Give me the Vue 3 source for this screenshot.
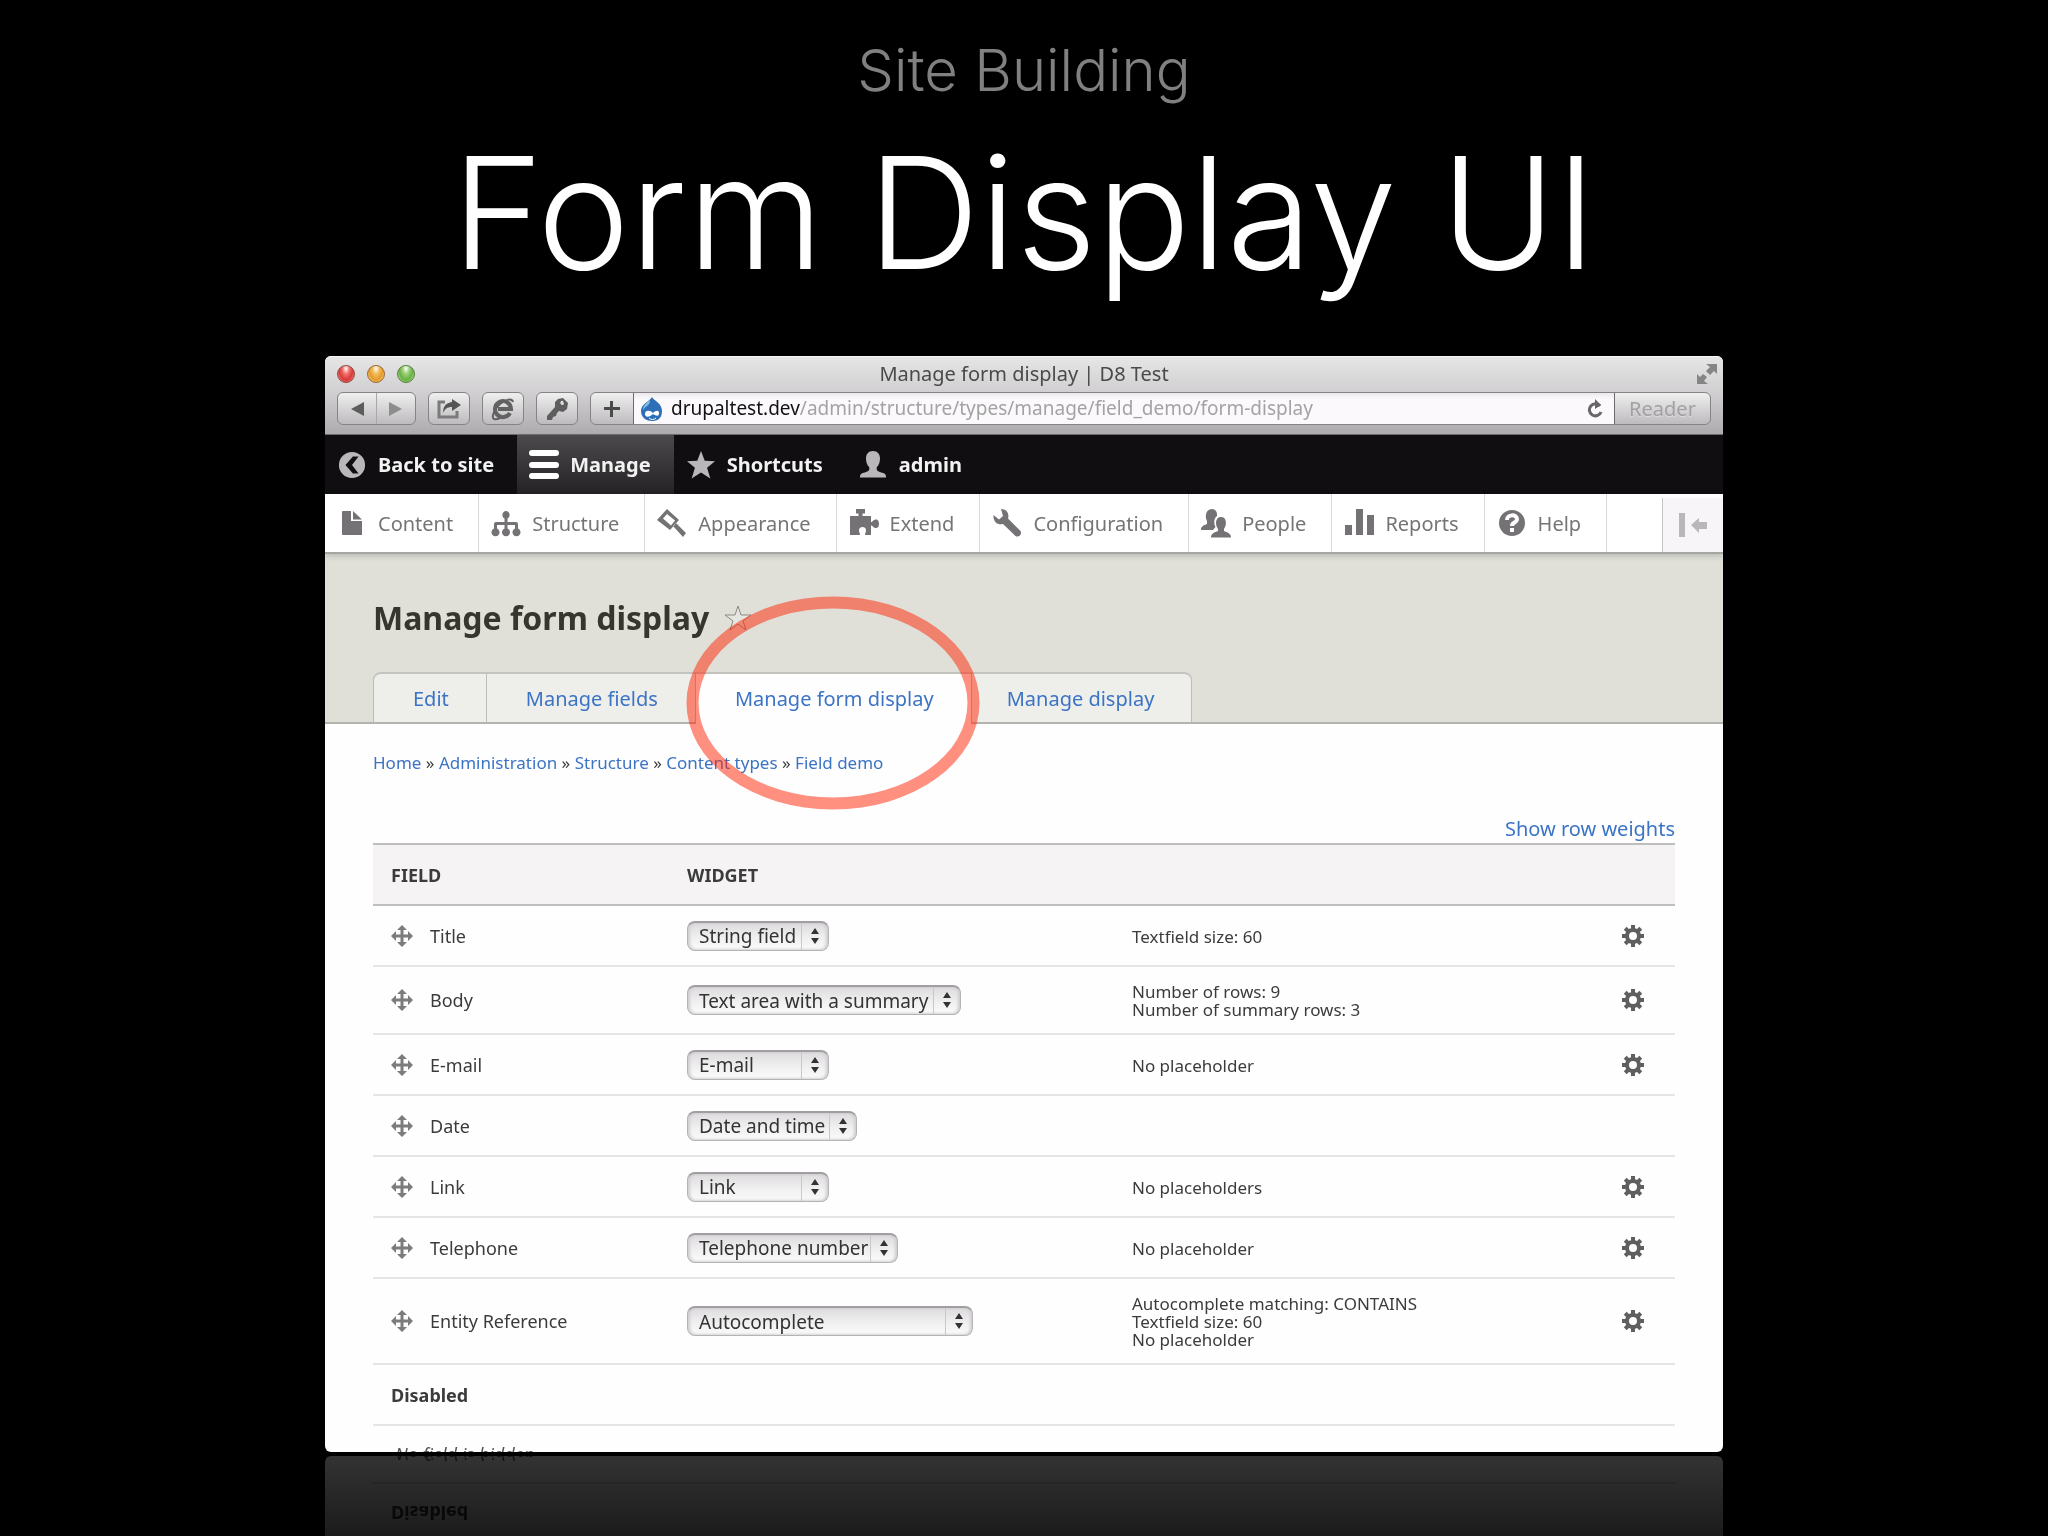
<script setup>
const toolbar = [
  { icon: 'back', label: 'Back to site' },
  { icon: 'menu', label: 'Manage', active: true },
  { icon: 'star', label: 'Shortcuts' },
  { icon: 'user', label: 'admin' },
]

const tray = [
  { icon: 'file', label: 'Content' },
  { icon: 'tree', label: 'Structure' },
  { icon: 'brush', label: 'Appearance' },
  { icon: 'puzzle', label: 'Extend' },
  { icon: 'wrench', label: 'Configuration' },
  { icon: 'people', label: 'People' },
  { icon: 'chart', label: 'Reports' },
  { icon: 'help', label: 'Help' },
]

/* Shapes on a 30 x 30 grid */
const glyphs = {
  back: 'M15 1a14 14 0 1 0 0 28a14 14 0 0 0 0-28zM16 6h6l-7 9 7 9h-6L8 15z',
  menu: 'M3 0h24a3 3 0 0 1 0 6H3a3 3 0 0 1 0-6zM3 12h24a3 3 0 0 1 0 6H3a3 3 0 0 1 0-6zM3 23h24a3 3 0 0 1 0 6H3a3 3 0 0 1 0-6z',
  star: 'M15 0l4 10.500 11 .500-8.500 7 3.500 11.500-10-6.500-10 6.500 3.500-11.500-8.500-7 11-.500z',
  user: 'M15 0c5 0 7.500 3.500 7.500 8 0 4-1.500 7.500-3.500 9.500v2.500c1 2 4 2.500 7 3.500 2.500 1 3 2 3 5H1c0-3 .500-4 3-5 3-1 6-1.500 7-3.500v-2.500C9 15.500 7.500 12 7.500 8 7.500 3.500 10 0 15 0z',
  file: 'M6 3h8v10h11v14H6a1 1 0 0 1-1-1V4a1 1 0 0 1 1-1zM16 3l9 8.500h-9z',
  tree: 'M15 3a4 4 0 0 1 1.500 7.500V14H25a2 2 0 0 1 2 2v4.500a4 4 0 1 1-3 0V17h-7.500v3.500a4 4 0 1 1-3 0V17H6v3.500a4 4 0 1 1-3 0V16a2 2 0 0 1 2-2h8.500v-3.500A4 4 0 0 1 15 3z',
  brush: 'M10 1l12 11-9 10L0 12zM10 6l-4 4.500 8 7 4-5zM16 18l3-3 10 10-3 4z',
  puzzle: 'M1 8h8.500V5.500H7V1h9v4.500h-2.500V8H22v6c2 0 2-2.500 5-2.500 4 0 4 8.500 0 8.500-3 0-3-2.500-5-2.500V27h-6c0-2 1-2.500 1-5 0-4-7-4-7 0 0 2.500 1 3 1 5H1z',
  wrench: 'M9 1c6 0 8.500 5 7 9.500L28.500 23c2 3-2 7-5 5L11 16C6 17.500 1 14 1.500 7l5.500 4.500L11 8z',
  people: 'M11 1c3.500 0 5.500 3 5 7-3 2-3.500 7-1.500 11L12 22H0c0-3 1-4 6-6v-3C4 10 4 1 11 1zM20 9c6 0 6 8 3 12v2c5 2 7 3 7 6.500H10c0-3.500 2-4.500 7-6.500v-2c-3-4-3-12 3-12z',
  chart: 'M1 17h7v10H1zM12 1h7v26h-7zM23 7h7v20h-7z',
}

const tabs = [
  { label: 'Edit' },
  { label: 'Manage fields' },
  { label: 'Manage form display', active: true },
  { label: 'Manage display' },
]

const crumbs = ['Home', 'Administration', 'Structure', 'Content types', 'Field demo']

const fields = [
  { name: 'Title', widget: 'String field', width: 142, summary: ['Textfield size: 60'] },
  { name: 'Body', widget: 'Text area with a summary', width: 274, summary: ['Number of rows: 9', 'Number of summary rows: 3'] },
  { name: 'E-mail', widget: 'E-mail', width: 142, summary: ['No placeholder'] },
  { name: 'Date', widget: 'Date and time', width: 170, summary: [] },
  { name: 'Link', widget: 'Link', width: 142, summary: ['No placeholders'] },
  { name: 'Telephone', widget: 'Telephone number', width: 211, summary: ['No placeholder'] },
  { name: 'Entity Reference', widget: 'Autocomplete', width: 286, summary: ['Autocomplete matching: CONTAINS', 'Textfield size: 60', 'No placeholder'] },
]

const teeth = [0, 45, 90, 135, 180, 225, 270, 315]
</script>

<template>
  <main class="slide">
    <p class="section">Site Building</p>
    <h1 class="heading">Form Display UI</h1>

    <div class="window">
      <header class="chrome">
        <div class="titlebar">
          <div class="lights">
            <i class="light red"></i><i class="light amber"></i><i class="light green"></i>
          </div>
          <span class="title">Manage form display | D8 Test</span>
          <svg class="expand" viewBox="0 0 22 22" aria-hidden="true">
            <path d="M10 1h11v10l-3-3-4 4-4-4 4-4zM12 21H1V11l3 3 3-3 4 3-3 4z" />
          </svg>
        </div>
        <div class="controls">
          <div class="history">
            <button type="button" aria-label="Previous page">
              <svg width="14" height="14" viewBox="0 0 14 14"><path d="M14 0v14L1 7z" fill="#5c5c5c" /></svg>
            </button>
            <button type="button" aria-label="Next page">
              <svg width="14" height="14" viewBox="0 0 14 14"><path d="M0 0v14l13-7z" fill="#8d8d8d" /></svg>
            </button>
          </div>
          <button type="button" class="tool" aria-label="Share">
            <svg width="26" height="22" viewBox="0 0 26 22">
              <path d="M9 4H3v15h18v-6" fill="none" stroke="#7b7b7b" stroke-width="3" />
              <path d="M16 1l9 6-9 6V9c-5 0-7 2-9 6 0-7 3-10 9-11z" fill="#555" />
            </svg>
          </button>
          <button type="button" class="tool" aria-label="Browser mode">
            <svg width="24" height="24" viewBox="0 0 24 24">
              <path d="M19 16a8 8 0 1 1 1-4H7" fill="none" stroke="#626262" stroke-width="4" />
              <path d="M22 5c-1-4-7-3-13 2S0 21 3 22c2 1 4 0 6-1" fill="none" stroke="#626262" stroke-width="2" />
            </svg>
          </button>
          <button type="button" class="tool" aria-label="Passwords">
            <svg width="24" height="24" viewBox="0 0 24 24">
              <path d="M13 2l5-1 5 5-1 6-4 3-4-1-2 2-1 3-3 1-1 3H2v-4l8-9V5zM18 4a2 2 0 1 0 1 3z" fill="#5e5e5e" fill-rule="evenodd" />
            </svg>
          </button>
          <div class="address">
            <button type="button" class="add" aria-label="Add bookmark">
              <svg width="16" height="16" viewBox="0 0 16 16"><path d="M6 0h3v6h7v3H9v7H6V9H0V6h6z" fill="#4a4a4a" /></svg>
            </button>
            <div class="url" role="textbox" aria-label="Address">
              <svg width="21" height="24" viewBox="0 0 21 24" aria-hidden="true">
                <path d="M11 0c2 4 10 6 10 14S16 24 11 24 0 21 0 14 8 5 11 0z" fill="#2d70b8" />
                <path d="M9 3C5 6 2 9 2 13c3-5 7-4 7-10z" fill="#86bce6" />
                <path d="M4 17c0-4 5-4 8-1 3-3 6-3 6 0 0 4-3 3-6 1-3 3-8 4-8 0z" fill="#fff" />
                <path d="M8 21c2 2 5 2 7 0" fill="none" stroke="#fff" stroke-width="1" />
              </svg>
              <span class="path"><b>drupaltest.dev</b>/admin/structure/types/manage/field_demo/form-display</span>
              <svg width="18" height="20" viewBox="0 0 18 20" aria-hidden="true">
                <path d="M14 7a6 6 0 1 0 1 6" fill="none" stroke="#666" stroke-width="3" />
                <path d="M9 0l6 6-6 4z" fill="#666" />
              </svg>
            </div>
            <button type="button" class="reader">Reader</button>
          </div>
        </div>
      </header>

      <nav class="bar">
        <a v-for="item in toolbar" :key="item.label" href="#" :class="{ active: item.active }">
          <svg class="glyph" viewBox="0 0 30 30" aria-hidden="true"><path :d="glyphs[item.icon]" fill-rule="evenodd" /></svg>
          {{ item.label }}
        </a>
      </nav>

      <nav class="tray">
        <a v-for="item in tray" :key="item.label" href="#">
          <svg class="glyph" viewBox="0 0 30 30" aria-hidden="true">
            <path v-if="glyphs[item.icon]" :d="glyphs[item.icon]" fill-rule="evenodd" />
            <template v-else>
              <circle cx="15" cy="15" r="13" />
              <path d="M10 12c0-6 10-6 10-1 0 4-5 3-5 7" fill="none" stroke="#fff" stroke-width="4" />
              <rect x="13" y="20" width="4" height="4" fill="#fff" />
            </template>
          </svg>
          {{ item.label }}
        </a>
        <button type="button" class="orient" aria-label="Vertical orientation">
          <svg width="30" height="24" viewBox="0 0 30 24"><path d="M1 0h6v24H1zM13 12l8-7v4h8v7h-8v4z" fill="#b9b7b9" /></svg>
        </button>
      </nav>

      <section class="head">
        <h2>
          Manage form display
          <svg width="28" height="28" viewBox="0 0 28 28" aria-hidden="true">
            <path d="M14 2l3 9h10l-8 6 3 9-8-6-8 6 3-9-8-6h10z" fill="#e6e6e0" stroke="#8b8b80" stroke-width="1" />
          </svg>
        </h2>
        <nav class="tabs">
          <a v-for="tab in tabs" :key="tab.label" href="#" :class="{ active: tab.active }">
            {{ tab.label }}<span v-if="tab.active" class="ring"></span>
          </a>
        </nav>
      </section>

      <section class="body">
        <nav class="crumbs">
          <template v-for="(crumb, i) in crumbs" :key="crumb"><span v-if="i"> » </span><a href="#">{{ crumb }}</a></template>
        </nav>
        <a class="weights" href="#">Show row weights</a>
        <table>
          <thead>
            <tr><th class="name">Field</th><th class="widget">Widget</th><th></th><th class="ops"></th></tr>
          </thead>
          <tbody>
            <tr v-for="field in fields" :key="field.name">
              <td>
                <div class="label">
                  <svg width="22" height="22" viewBox="0 0 22 22" aria-hidden="true">
                    <path d="M11 0l5 5h-3.500v4.500H17V6l5 5-5 5v-3.500h-4.500V17H16l-5 5-5-5h3.500v-4.500H5V16l-5-5 5-5v3.500h4.500V5H6z" fill="#7c7c7c" />
                  </svg>
                  <label :for="field.name">{{ field.name }}</label>
                </div>
              </td>
              <td>
                <span class="picker" :style="{ width: field.width + 'px' }">
                  <select :id="field.name"><option>{{ field.widget }}</option></select>
                  <svg width="8" height="16" viewBox="0 0 8 16" aria-hidden="true"><path d="M4 0l4 6H0zM4 16l4-6H0z" fill="#333" /></svg>
                </span>
              </td>
              <td class="summary"><div v-for="line in field.summary" :key="line">{{ line }}</div></td>
              <td>
                <button v-if="field.summary.length" type="button" class="gear" :aria-label="'Edit ' + field.name">
                  <svg width="22" height="22" viewBox="-11 -11 22 22">
                    <circle r="6" fill="none" stroke="#5f5f5f" stroke-width="4" />
                    <rect v-for="a in teeth" :key="a" x="-2" y="-11" width="4" height="5" fill="#5f5f5f" :transform="`rotate(${a})`" />
                  </svg>
                </button>
              </td>
            </tr>
            <tr><td colspan="4"><strong>Disabled</strong></td></tr>
            <tr><td colspan="4" class="empty"><em>No field is hidden.</em></td></tr>
          </tbody>
        </table>
      </section>
    </div>
  </main>
</template>

<style>
body {
  margin: 0;
  background: #000;
}
</style>

<style scoped>
* {
  box-sizing: border-box;
}

.slide {
  display: flex;
  flex-direction: column;
  align-items: center;
  height: 100vh;
  padding: 30px 16px 84px;
  overflow: hidden;
  background: #000;
  color: #fff;
  font-family: "Noto Sans", "Open Sans", sans-serif;
}

.section,
.heading {
  flex: none;
  margin: 0;
  font-family: Inter, Roboto, sans-serif;
  font-weight: 300;
}

.section {
  margin-bottom: 8px;
  color: #808080;
  font-size: 58px;
  line-height: 80px;
}

.heading {
  margin-bottom: 48px;
  font-size: 156px;
  line-height: 190px;
}

.window {
  flex: 1;
  width: 100%;
  max-width: 1398px;
  min-height: 0;
  overflow: hidden;
  border-radius: 6px;
  background: #fefefe;
  color: #3b3b3b;
  -webkit-box-reflect: below 4px linear-gradient(transparent calc(100% - 172px), rgba(0, 0, 0, 0.2));
}

button {
  display: flex;
  align-items: center;
  justify-content: center;
  margin: 0;
  padding: 0;
  border: 0;
  background: none;
  color: inherit;
  font: inherit;
}

a {
  color: #3b73c5;
  text-decoration: none;
}

/* Browser chrome */
.chrome {
  height: 79px;
  border-top: 1px solid #f6f6f6;
  border-bottom: 1px solid #6b6b6b;
  background: linear-gradient(#e6e6e6, #cfcdcf 50%, #adabad);
}

.titlebar {
  display: grid;
  grid-template-columns: 1fr auto 1fr;
  align-items: center;
  height: 33px;
  padding: 0 5px;
  font-size: 20px;
  line-height: 32px;
}

.title {
  color: #4a4a4a;
}

.lights {
  display: flex;
  gap: 12px;
  padding-left: 7px;
}

.light {
  width: 18px;
  height: 18px;
  border: 1px solid #8a4a40;
  border-radius: 50%;
}

.red {
  background: radial-gradient(ellipse at 50% 15%, #fff 0, #f0726c 30%, #d9393a 60%, #ff9a94);
}

.amber {
  border-color: #96693a;
  background: radial-gradient(ellipse at 50% 15%, #fff 0, #f3bd5a 30%, #e39a2b 60%, #ffe48a);
}

.green {
  border-color: #55803f;
  background: radial-gradient(ellipse at 50% 15%, #fff 0, #9ad075 30%, #69b044 60%, #c8f3a0);
}

.expand {
  justify-self: end;
  width: 22px;
  height: 22px;
  fill: #858585;
}

.controls {
  display: flex;
  gap: 12px;
  padding: 2px 12px 0;
}

.history,
.tool,
.address {
  height: 33px;
  border: 1px solid #858385;
  border-radius: 6px;
  background: linear-gradient(#f0eff0, #bdbbbd);
}

.history {
  display: flex;
  width: 79px;
}

.history button {
  flex: 1;
}

.history button + button {
  border-left: 1px solid #a9a7a9;
}

.tool {
  width: 42px;
}

.address {
  display: flex;
  flex: 1;
  overflow: hidden;
}

.add {
  width: 42px;
}

.url {
  display: flex;
  flex: 1;
  align-items: center;
  gap: 9px;
  padding: 0 10px 0 7px;
  border: solid #6b6b6b;
  border-width: 0 1px;
  background: linear-gradient(#ebe9eb, #fbf9fb 20%, #fbf9fb);
  font-size: 19px;
  line-height: 31px;
}

.path {
  flex: 1;
  color: #a3a3a3;
}

.path b {
  color: #111;
  font-weight: 400;
}

.reader {
  width: 95px;
  color: #a2a0a2;
  font-size: 20px;
  text-shadow: 0 1px 0 #dcdcdc;
}

/* Admin toolbar */
.bar,
.tray {
  display: flex;
  height: 59px;
  font-size: 20px;
  line-height: 59px;
}

.bar {
  background: #100e11;
}

.bar a,
.tray a {
  display: flex;
  align-items: center;
  gap: 11px;
  padding: 0 23px 0 12px;
}

.bar a {
  color: #f2f2f2;
  fill: #b9b7b9;
  font-weight: 700;
}

.bar .active {
  background: linear-gradient(#4c4a4c, #242224);
  fill: #fff;
}

.glyph {
  width: 30px;
  height: 30px;
}

.bar .glyph {
  padding: 1px;
}

.bar .active .glyph {
  padding: 0;
}

.tray {
  position: relative;
  height: 60px;
  border-bottom: 2px solid #a5a5a2;
  background: #fff;
  box-shadow: 0 2px 6px rgba(0, 0, 0, 0.18);
}

.tray a {
  border-right: 1px solid #d8d8d8;
  padding-right: 25px;
  color: #757575;
  fill: #757275;
}

.orient {
  width: 61px;
  margin: 4px 0 0 auto;
  border-left: 1px solid #c4c4c4;
  background: #f7f5f7;
}

/* Page header */
.head {
  padding: 42px 48px 0;
  border-bottom: 2px solid #b3b3af;
  background: #e0e0d9;
}

h2 {
  display: flex;
  align-items: center;
  gap: 15px;
  margin: 0 0 32px;
  color: #36362f;
  font-size: 32px;
  line-height: 44px;
}

.tabs {
  display: flex;
  height: 52px;
  margin-bottom: -2px;
}

.tabs a {
  height: 50px;
  padding: 0 37px 0 39px;
  border-top: 2px solid #c4c4be;
  border-right: 1px solid #bdbdb8;
  background: #eeeeea;
  font-size: 20px;
  line-height: 50px;
}

.tabs a:first-child {
  border-left: 1px solid #bdbdb8;
  border-top-left-radius: 8px;
}

.tabs a:last-child {
  border-top-right-radius: 8px;
}

.tabs .active {
  position: relative;
  z-index: 1;
  height: 52px;
  margin-right: -4px;
  background: #fefefe;
}

.ring {
  position: absolute;
  top: 29px;
  left: 50%;
  width: 293px;
  height: 213px;
  border: 12px solid rgba(255, 34, 0, 0.5);
  border-radius: 50%;
  transform: translate(-50%, -50%);
  pointer-events: none;
}

/* Page content */
.body {
  padding: 27px 48px 0;
}

.crumbs {
  margin-bottom: 40px;
  font-size: 17px;
  line-height: 24px;
  white-space: pre;
}

.weights {
  display: block;
  font-size: 20px;
  line-height: 28px;
  text-align: right;
}

table {
  width: 100%;
  border-collapse: collapse;
  table-layout: fixed;
  font-size: 18px;
  line-height: 24px;
}

th {
  height: 61px;
  padding: 0 0 0 18px;
  border: solid #bfbdbf;
  border-width: 2px 0;
  background: #f5f3f4;
  text-align: left;
  text-transform: uppercase;
}

.name {
  width: 296px;
}

.widget {
  width: 445px;
}

.ops {
  width: 71px;
}

td {
  height: 61px;
  padding: 14px 0 14px 18px;
  border-bottom: 2px solid #e6e4e6;
}

.label {
  display: flex;
  align-items: center;
  gap: 17px;
}

.summary {
  padding: 16px 0 14px 18px;
  font-size: 17px;
  line-height: 18px;
}

.picker {
  display: block;
  position: relative;
}

.picker select {
  display: block;
  width: 100%;
  height: 30px;
  padding: 0 0 0 11px;
  border: 1px solid #b5b3b5;
  border-top: 2px solid #a09ea0;
  border-radius: 8px;
  appearance: none;
  background:
    linear-gradient(#c9c7c9, #c9c7c9) right 26px top 0 / 1px 100% no-repeat,
    linear-gradient(#dddbdd, #f1f0f1 55%, #fafafa);
  box-shadow: inset 2px 0 3px #cfcdcf, inset -2px 0 3px #cfcdcf;
  color: #333;
  font: 19px/26px "Noto Sans", "Open Sans", sans-serif;
}

.picker svg {
  position: absolute;
  top: 7px;
  right: 10px;
}

.gear {
  width: 22px;
  height: 22px;
}

.empty {
  padding-top: 18px;
  line-height: 20px;
  vertical-align: top;
}

em {
  padding-left: 4px;
  color: #555;
}
</style>
